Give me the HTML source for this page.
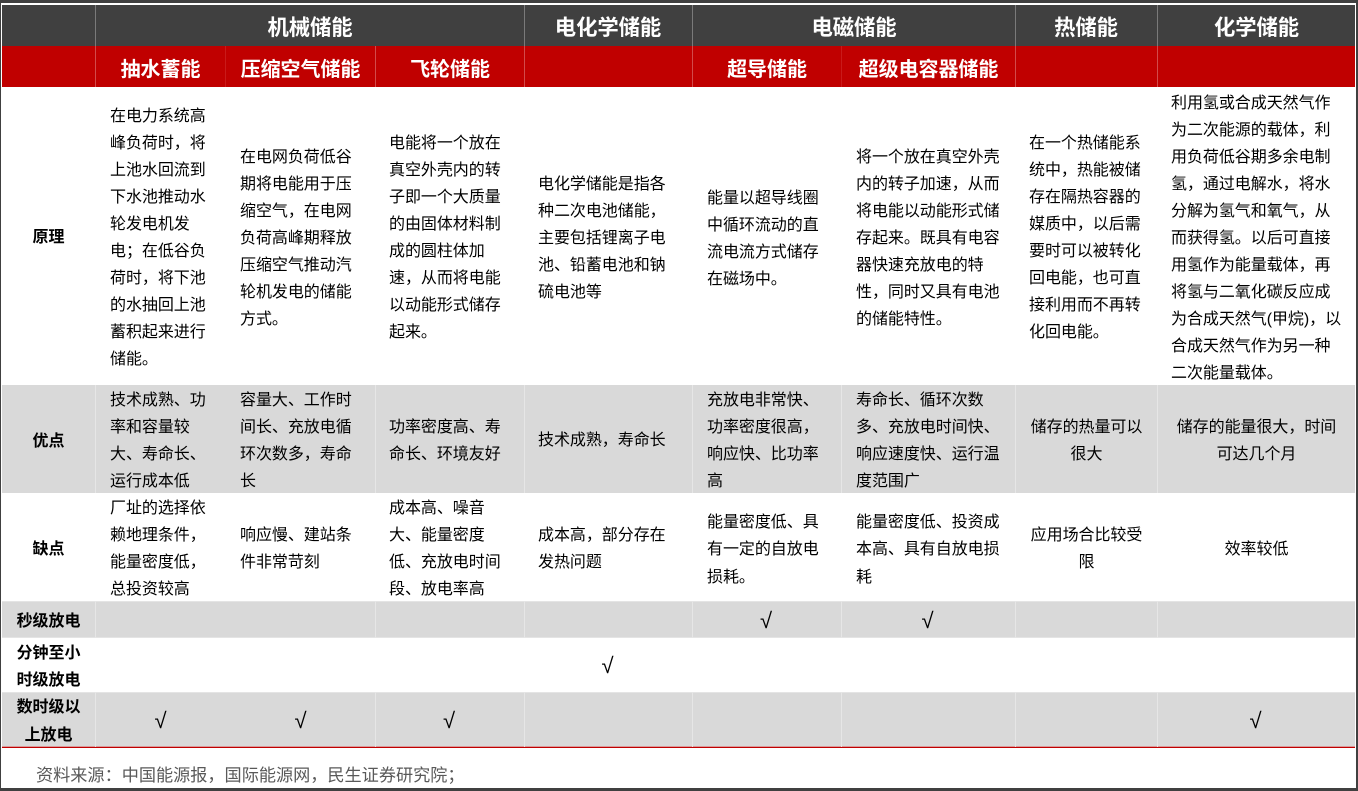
<!DOCTYPE html>
<html lang="zh">
<head>
<meta charset="utf-8">
<title>储能技术对比</title>
<style>
html,body{margin:0;padding:0;width:1358px;height:791px;overflow:hidden;background:#404040}
body{position:relative;font-family:"Liberation Sans","Noto Sans CJK SC",sans-serif;color:#000}
#paper{position:absolute;left:1px;top:3px;width:1355px;height:785px;background:#fff}
.bg{position:absolute;left:2px;width:1353px}
.v{position:absolute;width:1px}
.c{position:absolute;display:flex;align-items:center;font-size:16px;line-height:27.2px;white-space:nowrap;letter-spacing:-.05px;transform:translateY(2px)}
.c>div{width:100%}
.l{padding-left:14px;box-sizing:border-box}
.m{justify-content:center;text-align:center}
.h{font-size:21.33px;font-weight:700;color:#fff;line-height:28px}
.r{font-size:20px;transform:translateY(3px)}
.p{line-height:27px}
.t{transform:translateY(3px)}
.b{font-weight:700}
.k{font-size:22px;transform:translateY(1px)}
</style>
</head>
<body>
<div id="paper"></div>
<div class="bg" style="top:5px;height:41px;background:#404040"></div>
<div class="bg" style="top:46px;height:41px;background:#c00000"></div>
<div class="bg" style="top:385px;height:108px;background:#d9d9d9"></div>
<div class="bg" style="top:601px;height:37px;background:#d9d9d9"></div>
<div class="bg" style="top:692px;height:55px;background:#d9d9d9"></div>
<div class="bg" style="top:601px;height:1px;background:#e4e4e4"></div>
<div class="bg" style="top:637px;height:1px;background:#e4e4e4"></div>
<div class="bg" style="top:692px;height:1px;background:#e4e4e4"></div>
<div class="bg" style="top:746px;height:1px;background:#d99a9a"></div>
<div class="bg" style="top:747px;height:1px;background:#c00000"></div>

<!-- grid lines -->
<div class="v" style="left:95px;top:5px;height:41px;background:#7a7a7a"></div>
<div class="v" style="left:524px;top:5px;height:41px;background:#7a7a7a"></div>
<div class="v" style="left:692px;top:5px;height:41px;background:#7a7a7a"></div>
<div class="v" style="left:1015px;top:5px;height:41px;background:#7a7a7a"></div>
<div class="v" style="left:1157px;top:5px;height:41px;background:#7a7a7a"></div>

<div class="v" style="left:95px;top:46px;height:41px;background:#d24a4a"></div>
<div class="v" style="left:225px;top:46px;height:41px;background:#c91a1a"></div>
<div class="v" style="left:375px;top:46px;height:41px;background:#d24a4a"></div>
<div class="v" style="left:524px;top:46px;height:41px;background:#d24a4a"></div>
<div class="v" style="left:692px;top:46px;height:41px;background:#d24a4a"></div>
<div class="v" style="left:841px;top:46px;height:41px;background:#c91a1a"></div>
<div class="v" style="left:1015px;top:46px;height:41px;background:#d24a4a"></div>
<div class="v" style="left:1157px;top:46px;height:41px;background:#d24a4a"></div>

<div class="v" style="left:95px;top:385px;height:108px;background:#e6e6e6"></div>
<div class="v" style="left:375px;top:385px;height:108px;background:#e6e6e6"></div>
<div class="v" style="left:524px;top:385px;height:108px;background:#e6e6e6"></div>
<div class="v" style="left:692px;top:385px;height:108px;background:#e6e6e6"></div>
<div class="v" style="left:841px;top:385px;height:108px;background:#e6e6e6"></div>
<div class="v" style="left:1015px;top:385px;height:108px;background:#e6e6e6"></div>
<div class="v" style="left:1157px;top:385px;height:108px;background:#e6e6e6"></div>

<div class="v" style="left:95px;top:601px;height:37px;background:#e6e6e6"></div>
<div class="v" style="left:375px;top:601px;height:37px;background:#e6e6e6"></div>
<div class="v" style="left:524px;top:601px;height:37px;background:#e6e6e6"></div>
<div class="v" style="left:692px;top:601px;height:37px;background:#e6e6e6"></div>
<div class="v" style="left:841px;top:601px;height:37px;background:#e6e6e6"></div>
<div class="v" style="left:1015px;top:601px;height:37px;background:#e6e6e6"></div>
<div class="v" style="left:1157px;top:601px;height:37px;background:#e6e6e6"></div>

<div class="v" style="left:95px;top:692px;height:55px;background:#e6e6e6"></div>
<div class="v" style="left:375px;top:692px;height:55px;background:#e6e6e6"></div>
<div class="v" style="left:524px;top:692px;height:55px;background:#e6e6e6"></div>
<div class="v" style="left:692px;top:692px;height:55px;background:#e6e6e6"></div>
<div class="v" style="left:841px;top:692px;height:55px;background:#e6e6e6"></div>
<div class="v" style="left:1015px;top:692px;height:55px;background:#e6e6e6"></div>
<div class="v" style="left:1157px;top:692px;height:55px;background:#e6e6e6"></div>

<!-- header 1 -->
<div class="c m h" style="left:96px;top:5px;width:428px;height:41px"><div>机械储能</div></div>
<div class="c m h" style="left:524px;top:5px;width:168px;height:41px"><div>电化学储能</div></div>
<div class="c m h" style="left:693px;top:5px;width:322px;height:41px"><div>电磁储能</div></div>
<div class="c m h" style="left:1015px;top:5px;width:142px;height:41px"><div>热储能</div></div>
<div class="c m h" style="left:1158px;top:5px;width:197px;height:41px"><div>化学储能</div></div>

<!-- header 2 -->
<div class="c m h r" style="left:96px;top:46px;width:129px;height:41px"><div>抽水蓄能</div></div>
<div class="c m h r" style="left:226px;top:46px;width:149px;height:41px"><div>压缩空气储能</div></div>
<div class="c m h r" style="left:376px;top:46px;width:148px;height:41px"><div>飞轮储能</div></div>
<div class="c m h r" style="left:693px;top:46px;width:148px;height:41px"><div>超导储能</div></div>
<div class="c m h r" style="left:842px;top:46px;width:173px;height:41px"><div>超级电容器储能</div></div>

<!-- row labels -->
<div class="c m b p" style="left:2px;top:86px;width:93px;height:298px"><div>原理</div></div>
<div class="c m b t" style="left:2px;top:385px;width:93px;height:108px"><div>优点</div></div>
<div class="c m b t" style="left:2px;top:493px;width:93px;height:108px"><div>缺点</div></div>
<div class="c m b" style="left:2px;top:601px;width:93px;height:37px"><div>秒级放电</div></div>
<div class="c m b" style="left:2px;top:638px;width:93px;height:54px"><div>分钟至小<br>时级放电</div></div>
<div class="c m b" style="left:2px;top:692px;width:93px;height:55px"><div>数时级以<br>上放电</div></div>

<!-- 原理 -->
<div class="c l p" style="left:96px;top:87px;width:129px;height:298px"><div>在电力系统高<br>峰负荷时，将<br>上池水回流到<br>下水池推动水<br>轮发电机发<br>电；在低谷负<br>荷时，将下池<br>的水抽回上池<br>蓄积起来进行<br>储能。</div></div>
<div class="c l p" style="left:226px;top:87px;width:149px;height:298px"><div>在电网负荷低谷<br>期将电能用于压<br>缩空气，在电网<br>负荷高峰期释放<br>压缩空气推动汽<br>轮机发电的储能<br>方式。</div></div>
<div class="c l p" style="left:375px;top:87px;width:148px;height:298px"><div>电能将一个放在<br>真空外壳内的转<br>子即一个大质量<br>的由固体材料制<br>成的圆柱体加<br>速，从而将电能<br>以动能形式储存<br>起来。</div></div>
<div class="c l p" style="left:524px;top:87px;width:167px;height:298px"><div>电化学储能是指各<br>种二次电池储能，<br>主要包括锂离子电<br>池、铅蓄电池和钠<br>硫电池等</div></div>
<div class="c l p" style="left:693px;top:88px;width:148px;height:298px"><div>能量以超导线圈<br>中循环流动的直<br>流电流方式储存<br>在磁场中。</div></div>
<div class="c l p" style="left:842px;top:87px;width:173px;height:298px"><div>将一个放在真空外壳<br>内的转子加速，从而<br>将电能以动能形式储<br>存起来。既具有电容<br>器快速充放电的特<br>性，同时又具有电池<br>的储能特性。</div></div>
<div class="c l p" style="left:1015px;top:87px;width:141px;height:298px"><div>在一个热储能系<br>统中，热能被储<br>存在隔热容器的<br>媒质中，以后需<br>要时可以被转化<br>回电能，也可直<br>接利用而不再转<br>化回电能。</div></div>
<div class="c l p" style="left:1157px;top:87px;width:197px;height:298px"><div>利用氢或合成天然气作<br>为二次能源的载体，利<br>用负荷低谷期多余电制<br>氢，通过电解水，将水<br>分解为氢气和氧气，从<br>而获得氢。以后可直接<br>用氢作为能量载体，再<br>将氢与二氧化碳反应成<br>为合成天然气(甲烷)，以<br>合成天然气作为另一种<br>二次能量载体。</div></div>

<!-- 优点 -->
<div class="c l" style="left:96px;top:385px;width:129px;height:108px"><div>技术成熟、功<br>率和容量较<br>大、寿命长、<br>运行成本低</div></div>
<div class="c l" style="left:226px;top:385px;width:149px;height:108px"><div>容量大、工作时<br>间长、充放电循<br>环次数多，寿命<br>长</div></div>
<div class="c l" style="left:375px;top:385px;width:148px;height:108px"><div>功率密度高、寿<br>命长、环境友好</div></div>
<div class="c l" style="left:524px;top:385px;width:167px;height:108px"><div>技术成熟，寿命长</div></div>
<div class="c l" style="left:693px;top:385px;width:148px;height:108px"><div>充放电非常快、<br>功率密度很高，<br>响应快、比功率<br>高</div></div>
<div class="c l" style="left:842px;top:385px;width:173px;height:108px"><div>寿命长、循环次数<br>多、充放电时间快、<br>响应速度快、运行温<br>度范围广</div></div>
<div class="c m" style="left:1016px;top:385px;width:141px;height:108px"><div>储存的热量可以<br>很大</div></div>
<div class="c m" style="left:1158px;top:385px;width:197px;height:108px"><div>储存的能量很大，时间<br>可达几个月</div></div>

<!-- 缺点 -->
<div class="c l" style="left:96px;top:493px;width:129px;height:108px"><div>厂址的选择依<br>赖地理条件，<br>能量密度低，<br>总投资较高</div></div>
<div class="c l" style="left:226px;top:493px;width:149px;height:108px"><div>响应慢、建站条<br>件非常苛刻</div></div>
<div class="c l" style="left:375px;top:493px;width:148px;height:108px"><div>成本高、噪音<br>大、能量密度<br>低、充放电时间<br>段、放电率高</div></div>
<div class="c l" style="left:524px;top:493px;width:167px;height:108px"><div>成本高，部分存在<br>发热问题</div></div>
<div class="c l t" style="left:693px;top:493px;width:148px;height:108px"><div>能量密度低、具<br>有一定的自放电<br>损耗。</div></div>
<div class="c l t" style="left:842px;top:493px;width:173px;height:108px"><div>能量密度低、投资成<br>本高、具有自放电损<br>耗</div></div>
<div class="c m" style="left:1016px;top:493px;width:141px;height:108px"><div>应用场合比较受<br>限</div></div>
<div class="c m t" style="left:1158px;top:493px;width:197px;height:108px"><div>效率较低</div></div>

<!-- checks -->
<div class="c m k" style="left:692px;top:601px;width:148px;height:37px"><div>√</div></div>
<div class="c m k" style="left:841px;top:601px;width:173px;height:37px"><div>√</div></div>
<div class="c m k" style="left:524px;top:638px;width:167px;height:54px"><div>√</div></div>
<div class="c m k" style="left:96px;top:692px;width:129px;height:55px"><div>√</div></div>
<div class="c m k" style="left:226px;top:692px;width:149px;height:55px"><div>√</div></div>
<div class="c m k" style="left:375px;top:692px;width:148px;height:55px"><div>√</div></div>
<div class="c m k" style="left:1157px;top:692px;width:197px;height:55px"><div>√</div></div>

<div class="c" style="left:36px;top:760px;height:27px;color:#595959;font-size:17.15px;letter-spacing:0"><div>资料来源：中国能源报，国际能源网，民生证券研究院；</div></div>
</body>
</html>
